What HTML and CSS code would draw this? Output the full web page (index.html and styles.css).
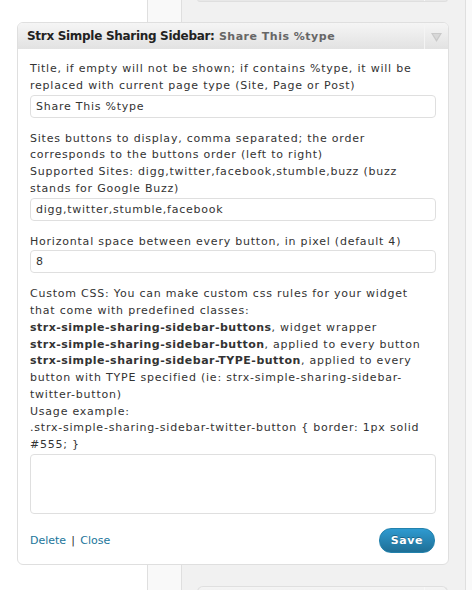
FILE: index.html
```html
<!DOCTYPE html>
<html>
<head>
<meta charset="utf-8">
<link rel="stylesheet" href="styles.css">
</head>
<body>
<div class="stub stub-top"><span class="stub-toggle"></span></div>
<div class="widget">
  <div class="widget-top">
    <h4 class="widget-title">Strx Simple Sharing Sidebar:<span class="in-title"> Share This %type</span></h4>
    <div class="toggle">
      <svg width="11" height="10" viewBox="0 0 11 10"><polygon points="0,1 11,1 5.5,10" fill="#c9c9c9"/><polygon points="2,2 9,2 5.5,7.5" fill="#d8d8d8"/></svg>
    </div>
  </div>
  <div class="widget-inside">
    <p class="field">
      <label class="lbl">Title, if empty will not be shown; if contains %type, it will be<br>replaced with current page type (Site, Page or Post)</label>
      <input class="txt" type="text" value="Share This %type">
    </p>
    <p class="field">
      <label class="lbl">Sites buttons to display, comma separated; the order<br>corresponds to the buttons order (left to right)<br>Supported Sites: digg,twitter,facebook,stumble,buzz (buzz<br>stands for Google Buzz)</label>
      <input class="txt" type="text" value="digg,twitter,stumble,facebook">
    </p>
    <p class="field">
      <label class="lbl">Horizontal space between every button, in pixel (default 4)</label>
      <input class="txt" type="text" value="8">
    </p>
    <p class="field">
      <label class="lbl">Custom CSS: You can make custom css rules for your widget<br>that come with predefined classes:<br><b class="cls">strx-simple-sharing-sidebar-buttons</b>, widget wrapper<br><b class="cls">strx-simple-sharing-sidebar-button</b>, applied to every button<br><b class="cls">strx-simple-sharing-sidebar-TYPE-button</b>, applied to every<br>button with TYPE specified (ie: strx-simple-sharing-sidebar-<br>twitter-button)<br>Usage example:<br>.strx-simple-sharing-sidebar-twitter-button { border: 1px solid<br>#555; }</label>
      <textarea class="area"></textarea>
    </p>
    <div class="controls">
      <div class="links"><a href="#">Delete</a> | <a href="#">Close</a></div>
      <button class="save" type="button">Save</button>
    </div>
  </div>
</div>
<div class="stub stub-bottom"><span class="stub-toggle"></span></div>
</body>
</html>
```

FILE: styles.css
```css
html, body {
  margin: 0;
  padding: 0;
  height: 590px;
  overflow: hidden;
}
body {
  font-family: "DejaVu Sans", Verdana, sans-serif;
  font-size: 11px;
  color: #333;
  background: linear-gradient(to right,
    #fff 0 147px,
    #dfdfdf 147px 148px,
    #f9f9f9 148px 181px,
    #dfdfdf 181px 182px,
    #f1f1f1 182px 465px,
    #dfdfdf 465px 466px,
    #f9f9f9 466px);
}
.stub {
  margin-left: 197px;
  width: 251px;
  background: linear-gradient(#eee, #e6e6e6);
  border: 1px solid #dfdfdf;
  position: relative;
  box-sizing: border-box;
}
.stub-top {
  height: 3px;
  margin-top: -1px;
  border-top: none;
  border-radius: 0 0 6px 6px;
}
.stub-bottom {
  height: 10px;
  margin-top: 21px;
  border-bottom: none;
  border-radius: 6px 6px 0 0;
  background: linear-gradient(#f4f4f4, #eeeeee);
}
.stub-toggle {
  position: absolute;
  top: 0;
  bottom: 0;
  right: 22px;
  width: 1px;
  background: #f8f8f8;
}
.widget {
  margin: 20px 0 0 17px;
  width: 432px;
  box-sizing: border-box;
  border: 1px solid #dfdfdf;
  border-radius: 6px;
  background: #fff;
  overflow: hidden;
}
.widget-top {
  display: flex;
  justify-content: space-between;
  align-items: stretch;
  height: 26px;
  background: linear-gradient(#f5f5f5, #e2e2e2);
}
.widget-title {
  margin: 0;
  padding: 0 9px;
  font-size: 12px;
  font-weight: bold;
  letter-spacing: -0.3px;
  line-height: 27px;
  color: #222;
  white-space: nowrap;
}
.in-title {
  font-size: 11px;
  letter-spacing: 0.5px;
  color: #666;
}
.toggle {
  width: 23px;
  border-left: 1px solid #f4f4f4;
  display: flex;
  align-items: center;
  justify-content: center;
  padding-top: 1px;
}
.widget-inside {
  padding: 0 12px 11px 12px;
}
.field {
  margin: 0;
  padding-top: 13px;
}
.field:first-child {
  padding-top: 12px;
}
.lbl {
  display: block;
  line-height: 16.75px;
  letter-spacing: 0.78px;
  white-space: nowrap;
}
.cls {
  letter-spacing: 0.48px;
}
.txt {
  display: block;
  box-sizing: border-box;
  width: 406px;
  height: 23px;
  margin: 0;
  padding: 2px 5px;
  border: 1px solid #dfdfdf;
  border-radius: 4px;
  font-family: "DejaVu Sans", Verdana, sans-serif;
  font-size: 11px;
  letter-spacing: 0.75px;
  color: #333;
  background: #fff;
  outline: none;
}
.area {
  display: block;
  box-sizing: border-box;
  width: 406px;
  height: 60px;
  margin: 0;
  border: 1px solid #dfdfdf;
  border-radius: 4px;
  resize: none;
  background: #fff;
}
.controls {
  display: flex;
  justify-content: space-between;
  align-items: center;
  margin-top: 14px;
}
.links {
  color: #333;
  padding-top: 1px;
  word-spacing: 1.7px;
}
.links a {
  color: #21759b;
  text-decoration: none;
  word-spacing: 0;
}
.save {
  width: 56px;
  height: 25px;
  margin-right: 1px;
  border: 1px solid #2382ad;
  border-radius: 12px;
  background: linear-gradient(#2e9ad0, #1f6f96);
  color: #fff;
  font-family: "DejaVu Sans", Verdana, sans-serif;
  font-size: 11px;
  font-weight: bold;
  letter-spacing: 0.6px;
  text-shadow: 0 -1px 0 rgba(0,0,0,0.3);
  padding: 0;
}
```
